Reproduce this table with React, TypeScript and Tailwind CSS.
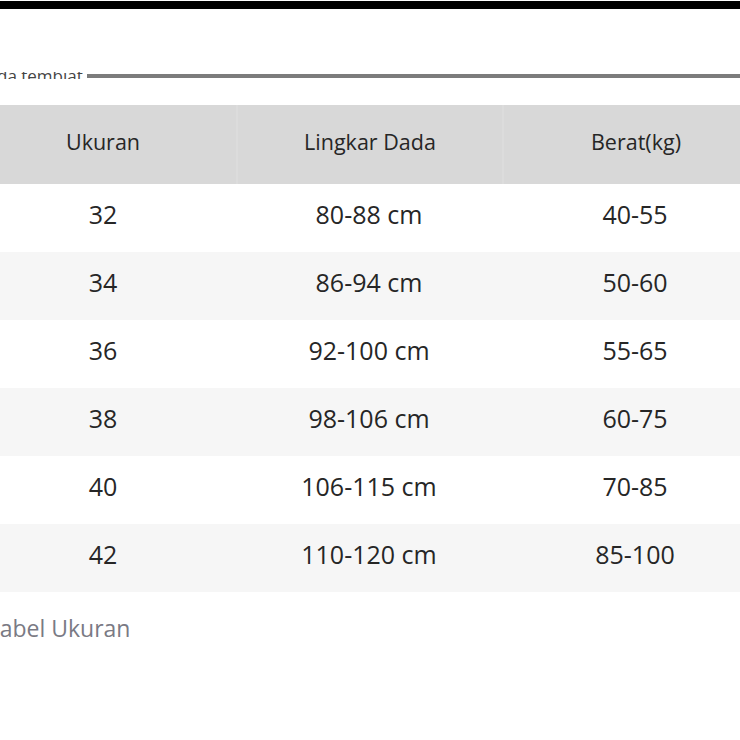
const rows = [
  ["32", "80-88 cm", "40-55"],
  ["34", "86-94 cm", "50-60"],
  ["36", "92-100 cm", "55-65"],
  ["38", "98-106 cm", "60-75"],
  ["40", "106-115 cm", "70-85"],
  ["42", "110-120 cm", "85-100"],
];

export default function App() {
  return (
    <div
      className="w-[740px] h-[740px] overflow-hidden bg-white text-[#262626]"
      style={{ fontFamily: '"Open Sans", "Noto Sans", sans-serif' }}
    >
      <div className="mt-px h-2 bg-black" />

      {/* cropped caption of the previous image */}
      <div className="mt-[63px] flex items-end gap-[2px]">
        <div className="w-[85px] h-[7px] overflow-hidden">
          <div className="-mt-[6px] text-[17px] leading-[20px] text-[#444] -ml-[3px] whitespace-nowrap">
            da tembiat
          </div>
        </div>
        <div className="flex-1 h-[4px] mb-[1px] bg-[#7c7c7c]" />
      </div>

      <div className="mt-[26px] -ml-[30px] w-[798px]">
        <div className="grid grid-cols-3 h-[79px] bg-[#d8d8d8] text-[21.5px]">
          <div className="flex items-center justify-center pb-1">Ukuran</div>
          <div className="flex items-center justify-center pb-1 border-l-2 border-[#dcdcdc]">Lingkar Dada</div>
          <div className="flex items-center justify-center pb-1 border-l-2 border-[#dcdcdc]">Berat(kg)</div>
        </div>
        {rows.map((r, i) => (
          <div
            key={r[0]}
            className={`grid grid-cols-3 h-[68px] text-[25px] ${i % 2 === 1 ? "bg-[#f6f6f6]" : "bg-white"}`}
          >
            {r.map((c) => (
              <div key={c} className="flex items-center justify-center pb-1.5">
                {c}
              </div>
            ))}
          </div>
        ))}
      </div>

      <div className="mt-[19px] -ml-[13px] text-[23px] text-[#7a7a84]">Tabel Ukuran</div>
    </div>
  );
}
